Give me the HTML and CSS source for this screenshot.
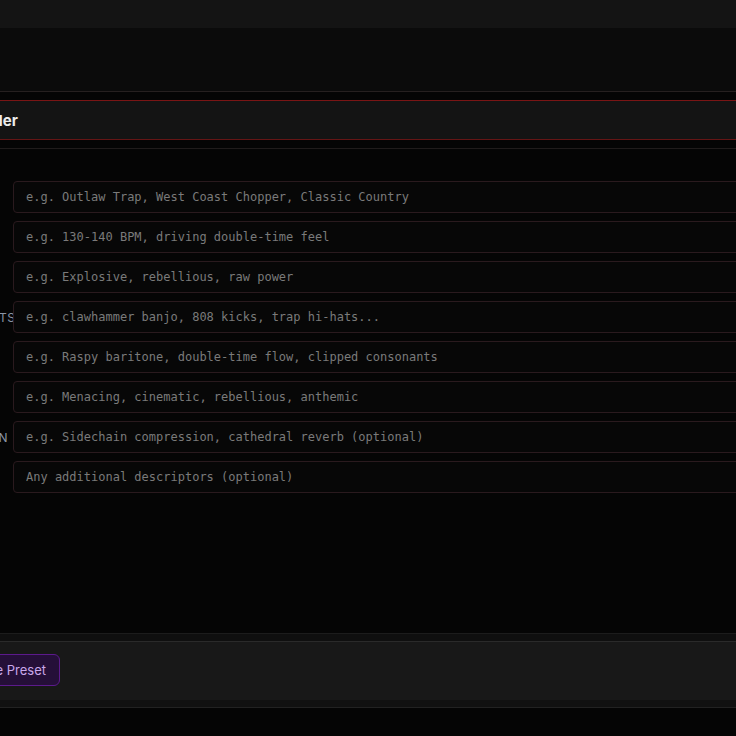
FILE: index.html
```html
<!DOCTYPE html>
<html lang="en">
<head>
    <meta charset="UTF-8">
    <meta name="viewport" content="width=device-width, initial-scale=1.0">
    <title>Prompt Builder</title>
    <link rel="stylesheet" href="styles.css">
</head>
<body>

<div class="topbar"></div>
<div class="hero"></div>

<section class="panel">
    <div class="panel-head">
        <h2 class="panel-title">Prompt Builder</h2>
    </div>

    <div class="panel-body">
        <div class="fields">
            <label class="field-label">GENRE</label>
            <input class="field-input" type="text" placeholder="e.g. Outlaw Trap, West Coast Chopper, Classic Country">

            <label class="field-label">TEMPO</label>
            <input class="field-input" type="text" placeholder="e.g. 130-140 BPM, driving double-time feel">

            <label class="field-label">ENERGY</label>
            <input class="field-input" type="text" placeholder="e.g. Explosive, rebellious, raw power">

            <label class="field-label">INSTRUMENTS</label>
            <input class="field-input" type="text" placeholder="e.g. clawhammer banjo, 808 kicks, trap hi-hats...">

            <label class="field-label">VOCALS</label>
            <input class="field-input" type="text" placeholder="e.g. Raspy baritone, double-time flow, clipped consonants">

            <label class="field-label">MOOD</label>
            <input class="field-input" type="text" placeholder="e.g. Menacing, cinematic, rebellious, anthemic">

            <label class="field-label">PRODUCTION</label>
            <input class="field-input" type="text" placeholder="e.g. Sidechain compression, cathedral reverb (optional)">

            <label class="field-label">EXTRA</label>
            <input class="field-input" type="text" placeholder="Any additional descriptors (optional)">
        </div>
    </div>

    <div class="panel-foot">
        <div class="foot-bar">
            <button class="btn-preset">Save Preset</button>
        </div>
    </div>
</section>

</body>
</html>
```

FILE: styles.css
```css
body {
    font-family: Inter, 'Liberation Sans', sans-serif;
    background-color: #050505;
    margin: 0;
    padding: 0;
    color: #e6e6e6;
    overflow: hidden;
    height: 736px;
}
.topbar {
    height: 28px;
    background: #141414;
}
.hero {
    height: 63px;
    background: #0b0b0b;
    border-bottom: 1px solid #262020;
}
.panel {
    margin-top: 8px;
}
.panel-head {
    height: 38px;
    display: flex;
    align-items: center;
    background: #141414;
    border-top: 1px solid #7a1515;
    border-bottom: 1px solid #651515;
}
.panel-title {
    margin: 0 0 0 -91px;
    font-size: 15px;
    font-weight: 700;
    color: #ececec;
    white-space: nowrap;
}
.panel-body {
    margin-top: 8px;
    height: 486px;
    border-top: 1px solid #201c1c;
    padding-top: 32px;
    box-sizing: border-box;
    border-bottom: 1px solid #1c1c1c;
}
.fields {
    display: grid;
    grid-template-columns: 88px 1fr;
    column-gap: 2px;
    row-gap: 8px;
    margin-left: -77px;
    margin-right: -40px;
}
/* labels sit left; long ones run under the input */
.field-label {
    align-self: center;
    text-align: left;
    white-space: nowrap;
    font-size: 12px;
    letter-spacing: 0.5px;
    color: #8a94a6;
}
.field-input {
    height: 32px;
    box-sizing: border-box;
    padding: 0 12px;
    background: #070707;
    border: 1px solid #2a1a1e;
    border-radius: 4px;
    font-family: 'DejaVu Sans Mono', 'Liberation Mono', monospace;
    font-size: 12px;
    color: #cfcfcf;
    outline: none;
}
.field-input::placeholder {
    color: #7a7a7a;
}
.panel-foot {
    background: #0f0f0f;
    padding-top: 7px;
    border-bottom: 1px solid #222222;
}
.foot-bar {
    height: 66px;
    box-sizing: border-box;
    background: #181818;
    border-top: 1px solid #2a2a2a;
    border-bottom: 7px solid #111111;
    padding-top: 1px;
    display: flex;
    align-items: center;
}
.btn-preset {
    margin-left: -41px;
    margin-top: -3px;
    height: 32px;
    padding: 0 13px;
    background: #250f38;
    border: 1px solid #5c1a8c;
    border-radius: 6px;
    color: #c9a8ea;
    font-family: Inter, 'Liberation Sans', sans-serif;
    font-size: 13px;
    cursor: pointer;
}
```
